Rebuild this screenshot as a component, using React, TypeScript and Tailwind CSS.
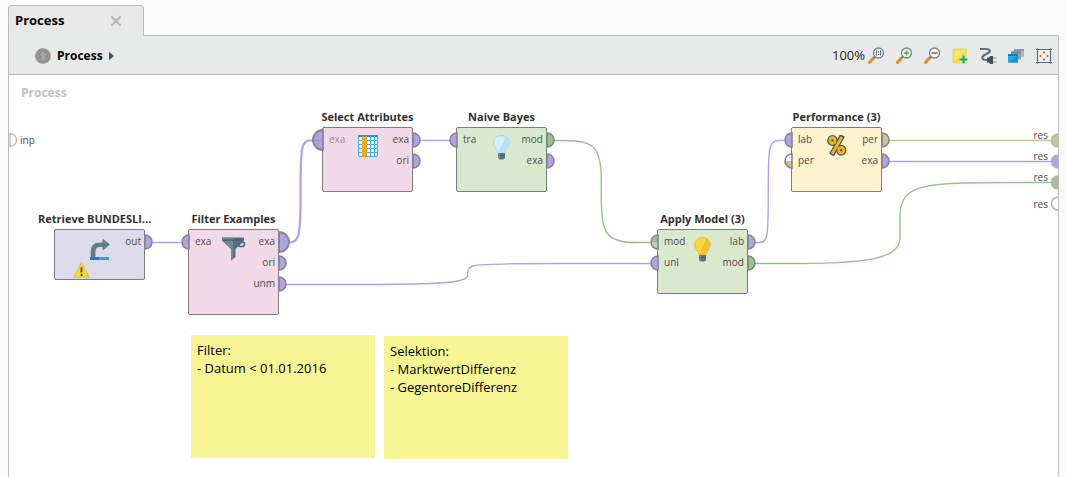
import type { ReactNode } from "react";
import clsx from "clsx";

const PURPLE = "#b0a2ea";
const GREEN = "#99c191";
const KHAKI = "#cdc291";
const GREY = "#c9c9c9";
const WHITE = "#ffffff";

type PortSpec = {
  label: string;
  top: string;
  bottom?: string;
  big?: boolean;
  faded?: boolean;
};

type OperatorSpec = {
  title: string;
  x: number;
  y: number;
  height: string;
  fill: string;
  icon: ReactNode;
  inputs: PortSpec[];
  outputs: PortSpec[];
  warning?: boolean;
};

function Port({ port, side }: { port: PortSpec; side: "in" | "out" }) {
  const r = port.big ? 10 : 7;
  const sweep = side === "out" ? 1 : 0;
  const end = side === "out" ? r : -r;
  return (
    <svg
      width="2"
      height="2"
      viewBox="-1 -1 2 2"
      aria-hidden="true"
      className={clsx("absolute top-1/2 -mt-px overflow-visible", side === "out" ? "-right-0.5" : "-left-px")}
    >
      <path d={`M0 ${-r} A${r} ${r} 0 0 ${sweep} 0 ${r} Z`} fill={port.top} />
      {port.bottom && <path d={`M0 0 H${end} A${r} ${r} 0 0 ${sweep} 0 ${r} Z`} fill={port.bottom} />}
      <path
        d={`M0 ${-r} A${r} ${r} 0 0 ${sweep} 0 ${r} Z`}
        fill="none"
        stroke="#868686"
        strokeWidth={port.big ? 1.8 : 1.6}
      />
      {port.big && side === "in" && <path d={`M${-r} .5H0`} stroke="#9a8dcb" strokeWidth=".8" />}
    </svg>
  );
}

function Ports({ ports, side }: { ports: PortSpec[]; side: "in" | "out" }) {
  return (
    <ul className="flex-1 pt-px">
      {ports.map((p) => (
        <li
          key={p.label}
          className={clsx(
            "relative flex h-[21px] items-center text-[10px]",
            side === "out" ? "justify-end pr-[3px]" : "pl-1.5",
            p.faded ? "text-[#9a9096]" : "text-[#4c4c4c]",
          )}
        >
          {p.label}
          <Port port={p} side={side} />
        </li>
      ))}
    </ul>
  );
}

function Warning() {
  return (
    <svg className="absolute bottom-px left-[18px]" width="17" height="16" viewBox="0 0 17 16" aria-label="Warning">
      <path d="M8.5 .8 16.2 15.2H.8Z" fill="#fcd835" stroke="#e6bd2d" strokeLinejoin="round" />
      <path d="M8.5 5.2v5.3M8.5 12v2" stroke="#4a4a3a" strokeWidth="1.8" />
    </svg>
  );
}

function RetrieveIcon() {
  return (
    <svg width="21" height="24" viewBox="0 0 21 24" aria-hidden="true">
      <path d="M2 19.500V15Q2 6 10.500 6H14V2.500L20.500 7.500 14 12.800V9.500H11Q6 9.500 6 15V19.500Z" fill="#607d89" stroke="#4b636e" strokeWidth=".6" />
      <path d="M1 20h19v3H1z" fill="#29a9e8" />
      <path d="M1 20h9v3H1z" fill="#0b83c8" />
    </svg>
  );
}

function FunnelIcon() {
  return (
    <svg width="24" height="24" viewBox="0 0 24 24" aria-hidden="true">
      <path d="M0 .5h22v3L13.500 12v8L9 23.500V12L0 3.500Z" fill="#546e7a" />
      <path d="M0 .5h11v2H0zM2 4h9v18.500l-2 1V12Z" fill="#708b98" />
      <path d="M0 3h21" stroke="#455a64" strokeWidth=".8" />
      <path d="M17 8.500c1-4 5.500-4.500 5.500-1.500S19 10 16 9" fill="none" stroke="#506c78" strokeWidth="1.700" />
    </svg>
  );
}

function TableIcon() {
  return (
    <svg width="20" height="22" viewBox="0 0 20 22" aria-hidden="true">
      <path d="M0 0h20v22H0z" fill="#fff" />
      <path d="M.5 2V21.500H19.500V2M8.500 2v20M12.500 2v20M16.500 2v20M0 5.500h20M0 9.500h20M0 13.500h20M0 17.500h20" stroke="#3fb4ec" fill="none" />
      <path d="M0 0h20v2H0z" fill="#1c96d4" />
      <path d="M4 1.500h5V22H4z" fill="#f9a01b" />
      <path d="M4 5.500h5M4 9.500h5M4 13.500h5M4 17.500h5" stroke="#ffb52e" />
    </svg>
  );
}

function BulbIcon({ lit }: { lit?: boolean }) {
  const base = lit ? "#fdd63b" : "#d7effb";
  const shade = lit ? "#f1c232" : "#b5e2f7";
  const edge = lit ? "#e3b028" : "#9fcfe6";
  return (
    <svg width="17" height="25" viewBox="0 0 17 25" aria-hidden="true">
      <path d="M8.500 .5C4 .5 .7 3.800 .7 8c0 4.200 4 6 4.300 10h7c.3-4 4.300-5.800 4.300-10 0-4.200-3.300-7.500-7.800-7.500Z" fill={base} stroke={edge} strokeWidth=".7" />
      <path d="M12.500 2 5.500 16.500 6 18H12c.3-4 4-5.800 4-10 0-2.500-1.500-4.700-3.500-6Z" fill={shade} />
      <path d="M5 18h7v4.500q0 2-3.500 2T5 22.500Z" fill="#5c7480" />
      <path d="M6 18.500v4.500" stroke="#93a7b0" />
      <path d="M5 20.500h7" stroke="#435761" strokeWidth=".7" />
    </svg>
  );
}

function PercentIcon() {
  return (
    <svg width="20" height="21" viewBox="0 0 20 21" fill="none" aria-hidden="true">
      <g stroke="#3f5964" strokeWidth="5.400">
        <ellipse cx="5.500" cy="5.500" rx="2.600" ry="2.800" />
        <ellipse cx="14.200" cy="15.200" rx="2.600" ry="2.800" />
        <path d="M15.500 .5 4.500 20" />
      </g>
      <g stroke="#fbb01e" strokeWidth="2.900">
        <ellipse cx="5.500" cy="5.500" rx="2.600" ry="2.800" />
        <ellipse cx="14.200" cy="15.200" rx="2.600" ry="2.800" />
        <path d="M14.800 2 5.200 18.700" />
      </g>
    </svg>
  );
}

const operators: OperatorSpec[] = [
  {
    title: "Retrieve BUNDESLI...", x: 45, y: 154, height: "h-[51px]", fill: "bg-[#dddaea]", icon: <RetrieveIcon />,
    inputs: [], outputs: [{ label: "out", top: PURPLE }], warning: true,
  },
  {
    title: "Filter Examples", x: 179, y: 154, height: "h-[86px]", fill: "bg-[#f1d9e7]", icon: <FunnelIcon />,
    inputs: [{ label: "exa", top: PURPLE }],
    outputs: [{ label: "exa", top: PURPLE, big: true }, { label: "ori", top: PURPLE }, { label: "unm", top: PURPLE }],
  },
  {
    title: "Select Attributes", x: 313, y: 52, height: "h-[65px]", fill: "bg-[#f1d9e7]", icon: <TableIcon />,
    inputs: [{ label: "exa", top: PURPLE, big: true, faded: true }],
    outputs: [{ label: "exa", top: PURPLE }, { label: "ori", top: PURPLE }],
  },
  {
    title: "Naive Bayes", x: 447, y: 52, height: "h-[65px]", fill: "bg-[#d9e9ce]", icon: <BulbIcon />,
    inputs: [{ label: "tra", top: PURPLE }],
    outputs: [{ label: "mod", top: GREEN }, { label: "exa", top: PURPLE }],
  },
  {
    title: "Apply Model (3)", x: 648, y: 154, height: "h-[65px]", fill: "bg-[#d9e9ce]", icon: <BulbIcon lit />,
    inputs: [{ label: "mod", top: GREEN, bottom: GREY }, { label: "unl", top: PURPLE }],
    outputs: [{ label: "lab", top: PURPLE }, { label: "mod", top: GREEN }],
  },
  {
    title: "Performance (3)", x: 782, y: 52, height: "h-[65px]", fill: "bg-[#fdf4cf]", icon: <PercentIcon />,
    inputs: [{ label: "lab", top: PURPLE }, { label: "per", top: WHITE, bottom: KHAKI }],
    outputs: [{ label: "per", top: KHAKI }, { label: "exa", top: PURPLE }],
  },
];

function Operator({ op }: { op: OperatorSpec }) {
  // Shortened titles start at the left edge of the title strip; the rest are centred.
  const shortened = op.title.endsWith("...");
  return (
    <section className="absolute w-[91px]" style={{ left: op.x, top: op.y }}>
      <h2
        className={clsx(
          "-mx-4 -mt-5 flex h-5 items-center text-[11px] font-bold whitespace-nowrap text-[#303030]",
          shortened ? "justify-start" : "justify-center",
        )}
      >
        {op.title}
      </h2>
      <div className={clsx("relative flex rounded-xs border border-[#7d7d7d]", op.height, op.fill)}>
        <Ports ports={op.inputs} side="in" />
        <Ports ports={op.outputs} side="out" />
        <span className="absolute inset-x-0 top-[7px] flex justify-center">{op.icon}</span>
        {op.warning && <Warning />}
      </div>
    </section>
  );
}

function Wires() {
  return (
    <svg className="absolute top-0 left-0 h-full w-full" fill="none" aria-hidden="true">
      <g transform="translate(-9 -75)" strokeWidth="1.400">
        <g stroke={PURPLE}>
          <path d="M152 242.500H181" />
          <path d="M286 284.500H365C440 284 466 283 467.500 276C468 264 467 264.500 520 263.700L560 263.500H650" />
          <path d="M420 140.500H450" />
          <path d="M755 242.500H760C768 242.500 768 234 768.300 200V180C768.500 148 769 140.500 779 140.500H784" />
          <path d="M889 161.500H2000" />
          <path d="M289 242.500C299 242.500 300 236 300.500 205V180C301 148 302 141 309 140.500H315" strokeWidth="2.200" />
        </g>
        <g stroke={GREEN}>
          <path d="M554 140.500H566C592 140.500 601 146 601.300 178V200C602 232 605 242.500 636 242.500H650" />
          <path d="M755 263.500H800C870 263 900 258 900 238V215C901 184 924 182.500 1010 182.500H2000" />
        </g>
        <path d="M889 140.500H2000" stroke={KHAKI} />
      </g>
    </svg>
  );
}

const results = [
  { fill: KHAKI, align: "items-start" },
  { fill: PURPLE, align: "items-start" },
  { fill: GREEN, align: "items-start" },
  { fill: WHITE, align: "items-center" },
];

function Results() {
  return (
    <ul className="absolute top-[55px] right-0 text-[10px] leading-[10px] text-[#4c4c4c]">
      {results.map((r) => (
        <li key={r.fill} className={clsx("flex h-[21px] gap-[3px]", r.align)}>
          res
          <svg width="7" height="21" viewBox="0 0 7 21" aria-hidden="true">
            <circle cx="7" cy="10.500" r="6.500" fill={r.fill} stroke="#b5b5b5" strokeWidth="1.500" />
          </svg>
        </li>
      ))}
    </ul>
  );
}

function Zoom({ children }: { children: ReactNode }) {
  return (
    <svg width="18" height="18" viewBox="0 0 18 18" fill="none" aria-hidden="true">
      <path d="M2.500 15.500 6.500 11" stroke="#e08a25" strokeWidth="3" strokeLinecap="round" />
      <path d="M6.500 11 8.300 9.200" stroke="#5d7580" strokeWidth="1.500" />
      <circle cx="11.500" cy="6" r="5" fill="#f5f8f9" stroke="#6f8791" strokeWidth="1.300" />
      {children}
    </svg>
  );
}

const tools: { label: string; icon: ReactNode }[] = [
  {
    label: "Zoom to original size",
    icon: <Zoom><path d="M9.500 3.500v5M13.500 3.500v5M11.500 4.500v1M11.500 7v1" stroke="#5d6f78" strokeWidth="1.200" /></Zoom>,
  },
  { label: "Zoom in", icon: <Zoom><path d="M11.500 3.500v5M9 6h5" stroke="#54a038" strokeWidth="1.500" /></Zoom> },
  { label: "Zoom out", icon: <Zoom><path d="M8.500 6h6" stroke="#d9472b" strokeWidth="1.600" /></Zoom> },
  {
    label: "Add note",
    icon: (
      <svg width="18" height="18" viewBox="0 0 18 18" aria-hidden="true">
        <path d="M2 2h13.500v14H2z" fill="#f8e65d" stroke="#e4cb45" strokeWidth=".7" />
        <path d="m2 16 13.500-14v14Z" fill="#f2dc50" />
        <path d="M12.500 8v9M8 12.500h9" stroke="#eef3df" strokeWidth="3.600" />
        <path d="M12.500 8.500v8M8.500 12.500h8" stroke="#17ab5f" strokeWidth="2.200" />
      </svg>
    ),
  },
  {
    label: "Auto-wire",
    icon: (
      <svg width="18" height="18" viewBox="0 0 18 18" fill="none" aria-hidden="true">
        <path d="M1 2H6.500C11.500 2 12 4.500 9 6L5.500 8C2 10 3 13 7 13H9" stroke="#587380" strokeWidth="2.200" />
        <path d="M8 10.500h2l1-1.500h3v8h-3l-1-1.500H8Z" fill="#3f535d" />
        <path d="M14 11h3.500M14 15h3.500" stroke="#dda24c" strokeWidth="1.700" />
      </svg>
    ),
  },
  {
    label: "Operator order",
    icon: (
      <svg width="18" height="18" viewBox="0 0 18 18" aria-hidden="true">
        <path d="M7 2h10v8H7z" fill="#a8bac1" />
        <path d="M7 2h10v2H7z" fill="#81969f" />
        <path d="M4 4.500h10v8H4z" fill="#8fa4ad" />
        <path d="M4 4.500h10v2H4z" fill="#698693" />
        <path d="M1 7h10v8.500H1z" fill="#27a9ea" />
        <path d="M1 7h10v2H1z" fill="#0b83c8" />
        <path d="m1 15.500 10-6.500v6.500Z" fill="#0e92da" />
      </svg>
    ),
  },
  {
    label: "Fit canvas",
    icon: (
      <svg width="18" height="18" viewBox="0 0 18 18" fill="none" aria-hidden="true">
        <path d="M2.500 2.500h13v13h-13z" fill="#f4f2f0" />
        <path d="M1 2.500h16M1 15.500h16M2.500 1v16M15.500 1v16" stroke="#587380" strokeWidth="1.200" />
        <path d="m9 4 1.600 2.200H7.400ZM9 14l1.600-2.200H7.400ZM4 9l2.200-1.600v3.200ZM14 9l-2.200-1.600v3.200Z" fill="#d8431f" />
      </svg>
    ),
  },
];

function Note({ className, lines }: { className: string; lines: string[] }) {
  return (
    <div
      className={clsx(
        "absolute h-[123px] w-[184px] bg-[#f8f595] px-1.5 py-1.5 text-[13px] leading-[18px] text-black",
        className,
      )}
    >
      {lines.map((line) => (
        <p key={line}>{line}</p>
      ))}
    </div>
  );
}

export default function App() {
  return (
    <main className="flex min-h-screen flex-col bg-[#fafafa] pt-[5px] pr-[7px] pl-2 font-['Open_Sans','Noto_Sans',sans-serif]">
      <div className="relative z-10 -mb-px flex h-[31px] w-[136px] items-center justify-between rounded-t border border-b-0 border-[#bbbbbb] bg-[#e8e8e8] pr-[21px] pl-1.5">
        <span className="text-[13px] font-bold text-black">Process</span>
        <button type="button" aria-label="Close Process" className="flex">
          <svg width="12" height="12" viewBox="0 0 12 12" aria-hidden="true">
            <path d="m1.500 1.500 9 9m0-9-9 9" stroke="#b8b8b8" strokeWidth="2" />
          </svg>
        </button>
      </div>
      <div className="flex flex-1 flex-col border border-b-0 border-[#bbbbbb] bg-white">
        <header className="flex h-[39px] items-center justify-between border-b border-[#bbbbbb] bg-[#e8eaea] pt-0.5 pr-[5px] pl-[26px]">
          <nav className="flex items-center gap-1.5" aria-label="Breadcrumb">
            <button type="button" aria-label="Up" className="flex">
              <svg width="16" height="16" viewBox="0 0 16 16" aria-hidden="true">
                <circle cx="8" cy="8" r="7.800" fill="#919191" />
                <path d="m8 3 4 4.500H9.500V13h-3V7.500H4Z" fill="#a8a8a8" />
              </svg>
            </button>
            <a href="#process" className="text-xs font-bold text-black">Process</a>
            <svg width="5" height="8" viewBox="0 0 5 8" aria-hidden="true">
              <path d="M0 0 5 4 0 8Z" fill="#4d4d4d" />
            </svg>
          </nav>
          <div className="flex items-center gap-[10px]">
            <span className="-mr-2 text-[13px] text-[#222222]">100%</span>
            {tools.map((t) => (
              <button key={t.label} type="button" aria-label={t.label} className="flex">
                {t.icon}
              </button>
            ))}
          </div>
        </header>
        <div id="process" className="relative min-h-[400px] flex-1 overflow-hidden">
          <h1 className="px-3 pt-[9px] text-xs leading-[18px] font-bold text-[#c2c2c2]">Process</h1>
          <Wires />
          <div className="absolute top-[54px] left-0 flex items-center gap-[3px] text-[10px] text-[#4c4c4c]">
            <svg width="8" height="22" viewBox="0 0 8 22" aria-hidden="true">
              <path d="M1 4.500A6.500 6.500 0 0 1 1 17.500Z" fill="#fff" stroke="#b8b8b8" strokeWidth="1.300" />
            </svg>
            inp
          </div>
          {operators.map((op) => (
            <Operator key={op.title} op={op} />
          ))}
          <Results />
          <Note className="top-[260px] left-[182px]" lines={["Filter:", "- Datum < 01.01.2016"]} />
          <Note className="top-[261px] left-[375px]" lines={["Selektion:", "- MarktwertDifferenz", "- GegentoreDifferenz"]} />
        </div>
      </div>
    </main>
  );
}
